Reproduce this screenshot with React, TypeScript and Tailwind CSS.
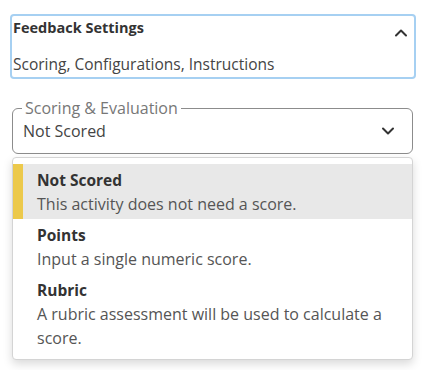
import { ChevronDown, ChevronUp } from "lucide-react";

const options = [
  { title: "Not Scored", desc: "This activity does not need a score.", selected: true },
  { title: "Points", desc: "Input a single numeric score.", selected: false },
  {
    title: "Rubric",
    desc: "A rubric assessment will be used to calculate a score.",
    selected: false,
  },
];

export default function App() {
  return (
    <div
      className="min-h-[370px] bg-white pt-[14px] text-[16px]"
      style={{ fontFamily: "'Open Sans', Lato, sans-serif" }}
    >
      <div className="ml-[10px] h-[65px] w-[406px] rounded-[4px] border-2 border-[#a6d0f2] pl-px">
        <div className="flex h-[27px] items-start justify-between">
          <span className="text-[14.5px] font-bold leading-[24px] text-[#333]">Feedback Settings</span>
          <ChevronUp className="mr-[3px] mt-[7px] h-[20px] w-[20px] text-[#333]" strokeWidth={2.4} />
        </div>
        <div className="mt-[9px] text-[15.5px] leading-[24px] text-[#444]">
          Scoring, Configurations, Instructions
        </div>
      </div>

      <fieldset className="ml-[12px] mt-[19px] w-[401px] rounded-[6px] border border-[#8c8c8c] pb-[10px]">
        <legend className="ml-[9px] px-[3px] leading-[20px] text-[#777]">Scoring &amp; Evaluation</legend>
        <div className="mt-px flex h-[24px] items-center justify-between pl-[10px] pr-[14px]">
          <span className="leading-[24px] text-[#444]">Not Scored</span>
          <ChevronDown className="h-[20px] w-[20px] text-[#333]" strokeWidth={2.4} />
        </div>
      </fieldset>

      <div className="ml-[12px] mt-[3px] w-[401px] rounded-[4px] border border-[#d4d4d4] bg-white py-[6px] shadow-[0_4px_10px_rgba(0,0,0,0.15)]">
        {options.map((o) => (
          <div
            key={o.title}
            className={
              o.selected
                ? "border-l-[10px] border-[#ecc94b] bg-[#e8e8e8] pb-[3px] pl-[14px] pr-[20px] pt-[4px]"
                : "pb-[3px] pl-[24px] pr-[20px] pt-[4px]"
            }
          >
            <div className="text-[15.5px] font-bold leading-[24px] text-[#333]">{o.title}</div>
            <div className="leading-[24px] text-[#555]">{o.desc}</div>
          </div>
        ))}
      </div>
    </div>
  );
}
